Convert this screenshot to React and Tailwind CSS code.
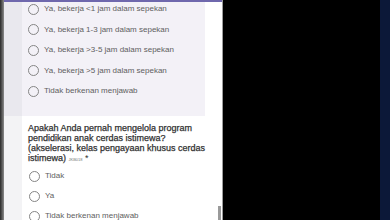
import React from 'react';

const firstOptions = [
    'Ya, bekerja <1 jam dalam sepekan',
    'Ya, bekerja 1-3 jam dalam sepekan',
    'Ya, bekerja >3-5 jam dalam sepekan',
    'Ya, bekerja >5 jam dalam sepekan',
    'Tidak berkenan menjawab',
];

const secondOptions = ['Tidak', 'Ya', 'Tidak berkenan menjawab'];

const Radio = ({ label, tight }) => (
    <div className={tight ? 'flex items-center h-[20.5px]' : 'flex items-center h-[20px]'}>
        <span className="w-[11px] h-[11px] rounded-full border-[1.5px] border-[#858585] shrink-0" />
        <span className="ml-[5px] text-[8px] text-[#606060] leading-none whitespace-nowrap">{label}</span>
    </div>
);

export default function App() {
    return (
        <div
            className="flex w-[390px] h-[220px] overflow-hidden bg-black"
            style={{ fontFamily: '"Liberation Sans", Arial, sans-serif' }}
        >
            {/* left dark edge */}
            <div className="w-[4px] h-full bg-gradient-to-r from-[#2a2a2a] to-[#8c8c8c]" />

            {/* form panel */}
            <div className="relative w-[218px] h-full flex bg-white">
                <div className="absolute top-0 left-0 right-0 h-[1.5px] bg-[#6f68ad]" />
                <div className="w-[18px] h-full flex flex-col">
                    <div className="h-[116px] shrink-0 bg-[#e9e8ee]" />
                    <div className="flex-1 bg-[#f3f3f5]" />
                </div>
                <div className="w-[200px] flex flex-col">
                    <div className="w-[183px] h-[116px] shrink-0 bg-[#f3f1f7] pl-[6px]">
                        <div className="flex flex-col -mt-[1px]">
                            {firstOptions.map(o => <Radio key={o} label={o} tight />)}
                        </div>
                    </div>
                    <div className="pl-[6px] pt-[7px]">
                        <p className="text-[9px] leading-[10px] text-[#303030] whitespace-nowrap [-webkit-text-stroke:0.25px_#303030]">
                            Apakah Anda pernah mengelola program<br />
                            pendidikan anak cerdas istimewa?<br />
                            (akselerasi, kelas pengayaan khusus cerdas<br />
                            istimewa){' '}
                            <span className="text-[4px] text-[#777] [-webkit-text-stroke:0px]">JKB018</span>{' '}
                            <span className="[-webkit-text-stroke:0px]">*</span>
                        </p>
                        <div className="flex flex-col mt-[1px] pl-[1px]">
                            {secondOptions.map(o => <Radio key={o} label={o} />)}
                        </div>
                    </div>
                </div>
                <div className="absolute right-[1px] bottom-0 w-[3px] h-[14px] bg-[#9a9a9a]" />
            </div>

            <div className="w-px h-full bg-[#9d9d9d]" />
            <div className="w-[157px] h-full bg-black" />
            <div className="w-[10px] h-full bg-[#0c1838]" />
        </div>
    );
}
